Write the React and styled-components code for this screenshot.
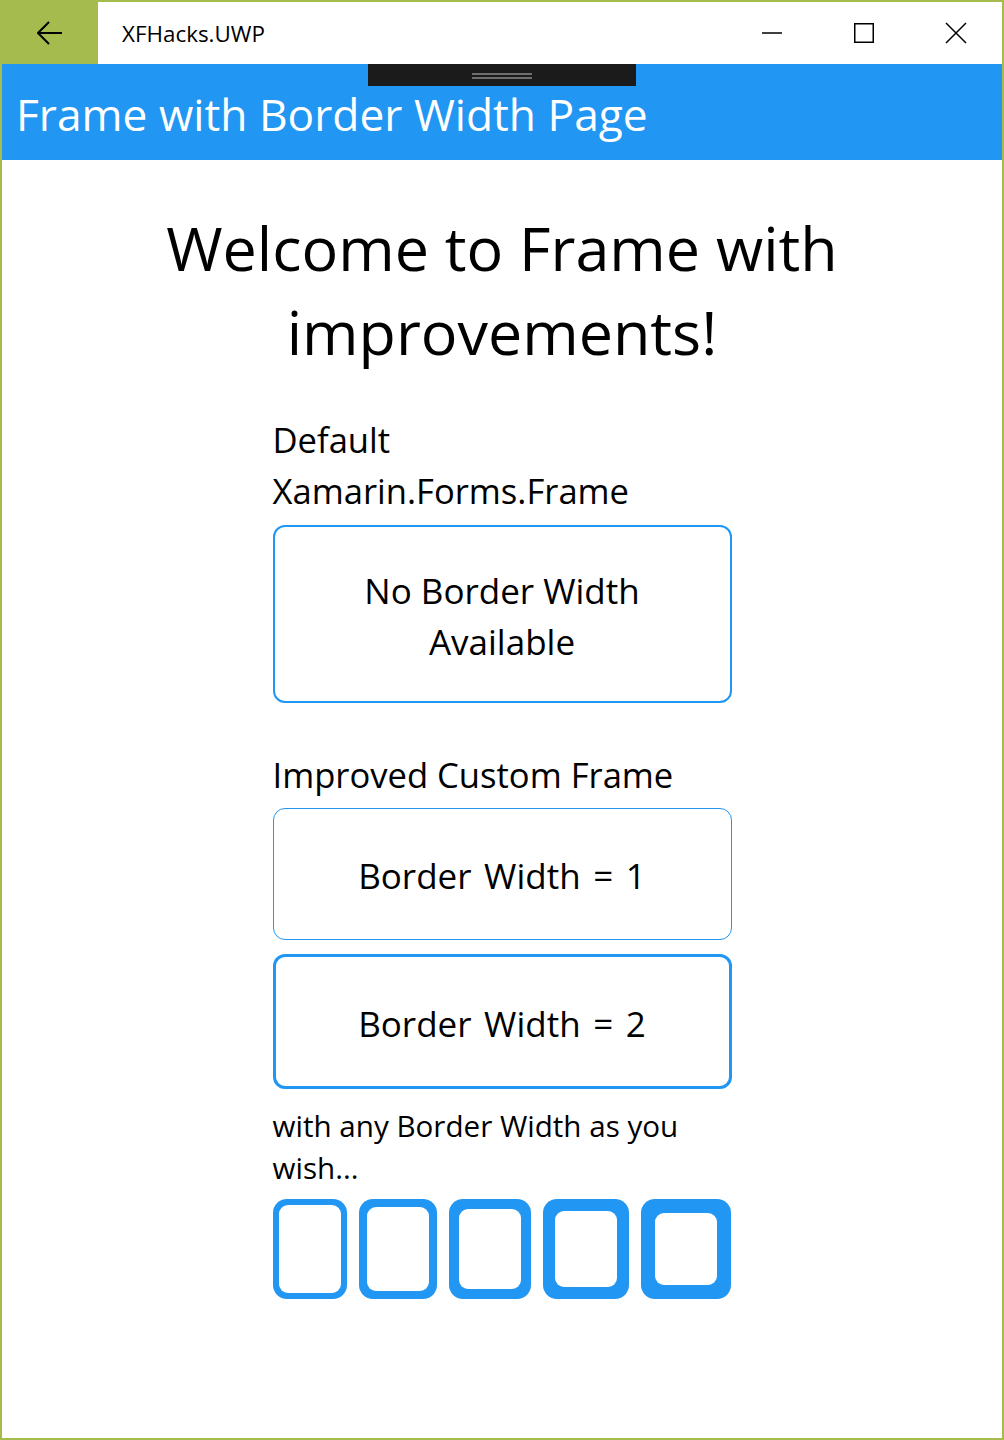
import styled, { createGlobalStyle } from "styled-components";

const BLUE = "#2196f3";
const GREEN = "#a5bb4d";

const GlobalStyle = createGlobalStyle`
  * { box-sizing: border-box; }
  body {
    margin: 0;
    background: #fff;
    font-family: "Open Sans", "Noto Sans", sans-serif;
    color: #000;
  }
`;

const smallFrames = [6, 8, 10, 12, 14];

const App = () => {
  return (
    <Window>
      <GlobalStyle />
      <TitleBar>
        <BackButton>
          <svg width="26" height="24" viewBox="0 0 26 24">
            <path d="M1 12 H25 M12 1 L1 12 L12 23" fill="none" stroke="#000" strokeWidth="2" />
          </svg>
        </BackButton>
        <AppTitle>XFHacks.UWP</AppTitle>
        <Controls>
          {/* minimize */}
          <ControlButton>
            <svg width="22" height="22" viewBox="0 0 22 22">
              <path d="M1 11 H21" stroke="#000" strokeWidth="1.5" />
            </svg>
          </ControlButton>
          {/* maximize */}
          <ControlButton>
            <svg width="22" height="22" viewBox="0 0 22 22">
              <rect x="1.75" y="1.75" width="18.5" height="18.5" fill="none" stroke="#000" strokeWidth="1.5" />
            </svg>
          </ControlButton>
          {/* close */}
          <ControlButton>
            <svg width="22" height="22" viewBox="0 0 22 22">
              <path d="M1 1 L21 21 M21 1 L1 21" stroke="#000" strokeWidth="1.5" />
            </svg>
          </ControlButton>
        </Controls>
      </TitleBar>
      <Header>
        <HeaderTitle>Frame with Border Width Page</HeaderTitle>
        <Gripper>
          <GripLine />
          <GripLine />
        </Gripper>
      </Header>
      <Content>
        <Heading>
          Welcome to Frame with
          <br />
          improvements!
        </Heading>
        <Column>
          <Label>
            Default
            <br />
            Xamarin.Forms.Frame
          </Label>
          <BigFrame $border={2} $height={178} $top={9}>
            <FrameText>
              No Border Width
              <br />
              Available
            </FrameText>
          </BigFrame>
          <Label $top={46}>Improved Custom Frame</Label>
          <BigFrame $border={1.5} $height={132} $top={8}>
            <FrameText $spaced>Border Width = 1</FrameText>
          </BigFrame>
          <BigFrame $border={3} $height={135} $top={14}>
            <FrameText $spaced>Border Width = 2</FrameText>
          </BigFrame>
          <Note>
            with any Border Width as you
            <br />
            wish...
          </Note>
          <SmallRow>
            {smallFrames.map((w) => (
              <SmallFrame key={w} $border={w}>
                <Hole />
              </SmallFrame>
            ))}
          </SmallRow>
        </Column>
      </Content>
    </Window>
  );
};

const Window = styled.div`
  width: 1004px;
  height: 1440px;
  border: 2px solid ${GREEN};
  display: flex;
  flex-direction: column;
  background: #fff;
`;

const TitleBar = styled.div`
  height: 62px;
  display: flex;
  align-items: center;
`;

const BackButton = styled.div`
  width: 96px;
  height: 100%;
  background: ${GREEN};
  display: flex;
  align-items: center;
  justify-content: center;
`;

const AppTitle = styled.div`
  margin-left: 24px;
  font-size: 22.4px;
  flex: 1;
`;

const Controls = styled.div`
  display: flex;
  height: 100%;
`;

const ControlButton = styled.div`
  width: 92px;
  height: 100%;
  display: flex;
  align-items: center;
  justify-content: center;
`;

const Header = styled.div`
  position: relative;
  height: 96px;
  background: ${BLUE};
  display: flex;
  align-items: center;
  padding-left: 14px;
`;

const HeaderTitle = styled.h1`
  margin: 0;
  color: #fff;
  font-weight: 400;
  font-size: 44.3px;
  line-height: 1;
  padding-top: 4px;
`;

const Gripper = styled.div`
  position: absolute;
  left: 366px;
  top: 0;
  width: 268px;
  height: 22px;
  background: #1b1b1b;
  display: flex;
  flex-direction: column;
  align-items: center;
  justify-content: center;
  gap: 2px;
  padding-top: 2px;
`;

const GripLine = styled.div`
  width: 60px;
  height: 2px;
  background: #6e6e6e;
`;

const Content = styled.div`
  display: flex;
  flex-direction: column;
  align-items: center;
  padding-top: 46px;
`;

const Heading = styled.h2`
  margin: 0;
  font-weight: 400;
  font-size: 61px;
  line-height: 84px;
  text-align: center;
`;

const Column = styled.div`
  width: 459px;
  margin-top: 40px;
  display: flex;
  flex-direction: column;
`;

const Label = styled.div`
  font-size: 34.6px;
  line-height: 51px;
  margin-top: ${(p) => p.$top || 0}px;
`;

const BigFrame = styled.div`
  height: ${(p) => p.$height}px;
  margin-top: ${(p) => p.$top}px;
  border: ${(p) => p.$border}px solid ${BLUE};
  border-radius: 12px;
  display: flex;
  align-items: center;
  justify-content: center;
`;

const FrameText = styled.div`
  font-size: 35px;
  line-height: 51px;
  text-align: center;
  padding-top: 3px;
  word-spacing: ${(p) => (p.$spaced ? "3.5px" : "normal")};
`;

const Note = styled.div`
  font-size: 29.6px;
  line-height: 42px;
  margin-top: 16px;
`;

const SmallRow = styled.div`
  display: flex;
  gap: 12px;
  margin-top: 10px;
`;

const SmallFrame = styled.div`
  width: ${(p) => 62 + p.$border * 2}px;
  height: 100px;
  padding: ${(p) => p.$border}px;
  background: ${BLUE};
  border-radius: 14px;
  display: flex;
`;

const Hole = styled.div`
  flex: 1;
  background: #fff;
  border-radius: 9px;
`;

export default App;
